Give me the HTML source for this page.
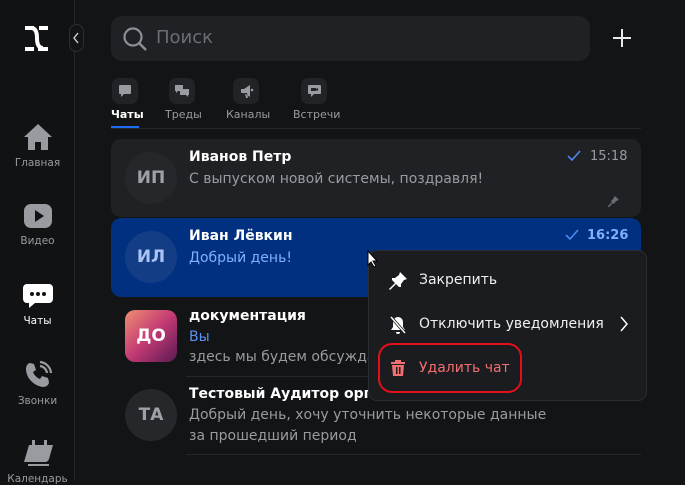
<!DOCTYPE html>
<html><head><meta charset="utf-8"><style>
*{box-sizing:border-box;margin:0;padding:0}
body{width:685px;height:481px;overflow:hidden;background:#131416;font-family:"DejaVu Sans","Liberation Sans",sans-serif;color:#fff;position:relative}
.abs{position:absolute}
.side{left:0;top:0;width:75px;height:481px;background:#111214;border-right:1px solid #26272a}
.nav{position:absolute;left:0;width:75px;text-align:center;font-size:10.5px;color:#9a9ba0}
.nav svg{display:block;margin:0 auto 5px}
.search{left:111px;top:16px;width:479px;height:45px;background:#202124;border-radius:11px}
.tab{position:absolute;top:78px;width:26px;height:26px;border-radius:7px;background:#222327}
.tl{position:absolute;top:108px;font-size:11px;color:#9a9ba0}
.card{position:absolute;left:111px;width:530px;border-radius:10px}
.av{position:absolute;left:125px;width:52px;height:52px;border-radius:50%;background:#26272b;color:#a0a1a6;font-weight:bold;font-size:17px;text-align:center;line-height:52px}
.nm{position:absolute;left:189px;font-size:14px;font-weight:bold;color:#fff;white-space:nowrap}
.ms{position:absolute;left:189px;font-size:14px;color:#9a9ba0;white-space:nowrap}
.tm{position:absolute;font-size:13px;color:#9a9ba0}
.menu{left:368px;top:250px;width:279px;height:151px;background:#1b1c1f;border:1px solid #2c2d31;border-radius:9px}
.mi{position:absolute;left:50px;font-size:14px;color:#f0f0f0;white-space:nowrap}
</style></head><body>
<div class="abs side"></div>
<!-- logo -->
<svg class="abs" style="left:24px;top:25px" width="25" height="27" viewBox="0 0 25 27"><path d="M1 1h9l0 4H1z M15 1h9v4h-9z M1 22h9v4H1z M14 22h10v4H14z" fill="#fff"/><path d="M7 3c5 0 6 5 6 10s1 10 6 10" stroke="#fff" stroke-width="4" fill="none"/></svg>
<div class="abs" style="left:69px;top:24px;width:15px;height:28px;border:1px solid #2e2f33;border-radius:8px;background:#131416"></div>
<svg class="abs" style="left:72px;top:32px" width="9" height="12" viewBox="0 0 9 12"><path d="M6 1L2 6l4 5" stroke="#cfd0d4" stroke-width="1.4" fill="none"/></svg>
<!-- nav -->
<div class="nav" style="top:122px"><svg width="32" height="30" viewBox="0 0 32 30"><path d="M16 2L2 15h4v13h7v-8h6v8h7V15h4z" fill="#9a9ba0"/></svg>Главная</div>
<div class="nav" style="top:202px"><svg width="30" height="28" viewBox="0 0 30 28"><rect x="1" y="2" width="28" height="24" rx="7" fill="#9a9ba0"/><path d="M12 8v12l9-6z" fill="#111214"/></svg>Видео</div>
<div class="nav" style="top:282px;color:#fff"><svg width="32" height="28" viewBox="0 0 32 28"><path d="M5 2h22a4 4 0 014 4v11a4 4 0 01-4 4H13l-6 5v-5H5a4 4 0 01-4-4V6a4 4 0 014-4z" fill="#fff"/><circle cx="10" cy="12" r="2" fill="#111"/><circle cx="16" cy="12" r="2" fill="#111"/><circle cx="22" cy="12" r="2" fill="#111"/></svg>Чаты</div>
<div class="nav" style="top:360px"><svg width="30" height="30" viewBox="0 0 30 30"><path d="M7 3l4 1 2 6-3 2c1 3 4 6 7 7l2-3 6 2 1 4c0 3-3 5-6 5C11 26 3 18 3 9c0-3 2-6 4-6z" fill="#9a9ba0"/><path d="M17 6a8 8 0 017 7M17 2a12 12 0 0111 11" stroke="#9a9ba0" stroke-width="2.2" fill="none"/></svg>Звонки</div>
<div class="nav" style="top:438px"><svg width="32" height="30" viewBox="0 0 32 30"><path d="M7 7h24l-4 14c-1 2-2 3-4 3H2z" fill="#9a9ba0"/><rect x="10" y="2" width="3" height="6" fill="#9a9ba0"/><rect x="22" y="2" width="3" height="6" fill="#9a9ba0"/><path d="M6 27h21" stroke="#9a9ba0" stroke-width="2"/></svg>Календарь</div>
<!-- search -->
<div class="abs search"></div>
<svg class="abs" style="left:122px;top:26px" width="26" height="26" viewBox="0 0 26 26"><circle cx="11" cy="11" r="8.5" stroke="#8e8f94" stroke-width="2.2" fill="none"/><path d="M17 17l7 7" stroke="#8e8f94" stroke-width="2.4"/></svg>
<div class="abs" style="left:156px;top:27px;font-size:18px;color:#6c6d72">Поиск</div>
<svg class="abs" style="left:612px;top:28px" width="20" height="20" viewBox="0 0 20 20"><path d="M10 1v18M1 10h18" stroke="#e8e8e8" stroke-width="2"/></svg>
<!-- tabs -->
<div class="tab" style="left:112px"></div><div class="tab" style="left:169px"></div><div class="tab" style="left:233px"></div><div class="tab" style="left:301px"></div>
<svg class="abs" style="left:118px;top:84px" width="14" height="14"><path d="M2 1h10a1 1 0 011 1v7a1 1 0 01-1 1H6l-3 3v-3H2a1 1 0 01-1-1V2a1 1 0 011-1z" fill="#9a9ba0"/></svg>
<svg class="abs" style="left:174px;top:84px" width="16" height="14"><path d="M1 1h8v6H4l-2 2V7H1z M6 5h9v6h-1v2l-2-2H6z" fill="#9a9ba0"/></svg>
<svg class="abs" style="left:239px;top:84px" width="16" height="15"><path d="M2 5h3l6-4v12L5 9H2z M6 9l1 5h2l-1-5z" fill="#9a9ba0"/><circle cx="13" cy="6" r="1.3" fill="#9a9ba0"/></svg>
<svg class="abs" style="left:307px;top:84px" width="15" height="14"><path d="M2 1h11a1 1 0 011 1v7a1 1 0 01-1 1H7l-3 3v-3H2a1 1 0 01-1-1V2a1 1 0 011-1z" fill="#9a9ba0"/><rect x="4" y="4" width="5" height="3" fill="#222327"/><path d="M9 5l2-1v3l-2-1z" fill="#222327"/></svg>
<div class="tl" style="left:111px;color:#fff;font-weight:bold">Чаты</div>
<div class="tl" style="left:165px">Треды</div>
<div class="tl" style="left:226px">Каналы</div>
<div class="tl" style="left:293px">Встречи</div>
<div class="abs" style="left:111px;top:128px;width:530px;height:1px;background:#26272a"></div>
<div class="abs" style="left:111px;top:126px;width:28px;height:2px;background:#1e6cf0"></div>
<!-- row1 -->
<div class="card" style="top:139px;height:78px;background:#202124"></div>
<div class="av" style="top:152px">ИП</div>
<div class="nm" style="top:149px">Иванов Петр</div>
<div class="ms" style="top:171px">С выпуском новой системы, поздравля!</div>
<svg class="abs" style="left:567px;top:150px" width="14" height="12"><path d="M1 6l4 4 8-9" stroke="#4d8ef5" stroke-width="1.5" fill="none"/></svg>
<div class="tm" style="left:590px;top:149px">15:18</div>
<svg class="abs" style="left:607px;top:195px" width="13" height="13"><path d="M8 1l4 4-3 1-2 3-1-1-4 4-1 0 0-1 4-4-1-1 2-2z" fill="#6c6d72"/></svg>
<!-- row2 -->
<div class="card" style="top:218px;height:79px;background:#00307f"></div>
<div class="av" style="top:231px;background:#133d85;color:#a9c4f2">ИЛ</div>
<div class="nm" style="top:228px">Иван Лёвкин</div>
<div class="ms" style="top:250px;color:#7fb0ff">Добрый день!</div>
<svg class="abs" style="left:565px;top:229px" width="14" height="12"><path d="M1 6l4 4 8-9" stroke="#4d8ef5" stroke-width="1.5" fill="none"/></svg>
<div class="tm" style="left:587px;top:228px;color:#7fb0ff;font-weight:bold">16:26</div>
<!-- row3 -->
<div class="abs" style="left:125px;top:310px;width:52px;height:52px;border-radius:10px;background:linear-gradient(135deg,#ef8e72,#c33a74 50%,#5a1a52);font-weight:bold;font-size:17px;text-align:center;line-height:52px">ДО</div>
<div class="nm" style="top:308px">документация</div>
<div class="ms" style="top:329px;color:#5b93f5">Вы</div>
<div class="ms" style="top:349px">здесь мы будем обсуждать</div>
<div class="abs" style="left:186px;top:376px;width:455px;height:1px;background:#26272a"></div>
<!-- row4 -->
<div class="av" style="top:389px">ТА</div>
<div class="nm" style="top:386px">Тестовый Аудитор организации</div>
<div class="ms" style="top:407px">Добрый день, хочу уточнить некоторые данные</div>
<div class="ms" style="top:428px">за прошедший период</div>
<div class="abs" style="left:186px;top:454px;width:455px;height:1px;background:#26272a"></div>
<!-- menu -->
<div class="abs menu">
<svg class="abs" style="left:19px;top:20px" width="20" height="20" viewBox="0 0 20 20"><path d="M12 1l7 7-3 1-3 4 0 3-2 0-3-3-6 6-1-1 6-6-3-3 0-2 3 0 4-3z" fill="#fff"/></svg>
<div class="mi" style="top:21px">Закрепить</div>
<svg class="abs" style="left:20px;top:64px" width="18" height="20" viewBox="0 0 18 20"><path d="M9 2a5 5 0 015 5v5l2 3H2l2-3V7a5 5 0 015-5z M7 17h4a2 2 0 01-4 0z" fill="#fff"/><path d="M2 2l14 16" stroke="#1b1c1f" stroke-width="3"/><path d="M2 2l14 16" stroke="#fff" stroke-width="1.4"/></svg>
<div class="mi" style="top:65px">Отключить уведомления</div>
<svg class="abs" style="left:250px;top:65px" width="10" height="16"><path d="M2 1l6 7-6 7" stroke="#fff" stroke-width="1.5" fill="none"/></svg>
<svg class="abs" style="left:21px;top:108px" width="16" height="18" viewBox="0 0 16 18"><path d="M5 1h6v2h4v2H1V3h4z M2 6h12l-1 11H3z" fill="#f07070"/><rect x="6" y="8" width="1.5" height="7" fill="#1b1c1f"/><rect x="9" y="8" width="1.5" height="7" fill="#1b1c1f"/></svg>
<div class="mi" style="top:109px;color:#f07070">Удалить чат</div>
</div>
<div class="abs" style="left:378px;top:343px;width:144px;height:50px;border:2px solid #e3101c;border-radius:14px"></div>
<!-- cursor -->
<svg class="abs" style="left:367px;top:250px" width="12" height="18" viewBox="0 0 12 18"><path d="M1 1v14l3-3 3 5 2-1-3-5h4z" fill="#fff" stroke="#000" stroke-width="1"/></svg>
</body></html>
